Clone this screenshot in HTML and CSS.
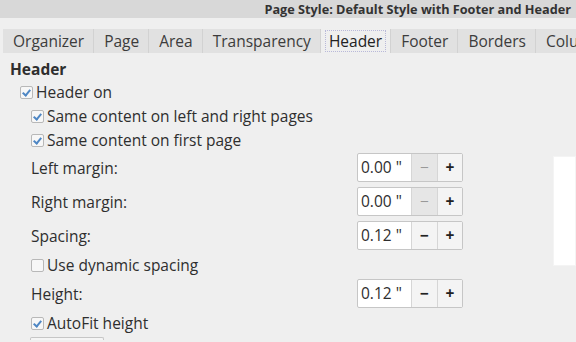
FILE: index.html
```html
<!DOCTYPE html>
<html lang="en">
<head>
    <meta charset="UTF-8">
    <title>Page Style</title>
    <link rel="stylesheet" href="styles.css">
</head>
<body>
    <div class="titlebar">Page Style: Default Style with Footer and Header</div>

    <div class="tabs">
        <div class="tab">Organizer</div>
        <div class="tab">Page</div>
        <div class="tab">Area</div>
        <div class="tab">Transparency</div>
        <div class="tab active"><span class="focus">Header</span></div>
        <div class="tab">Footer</div>
        <div class="tab">Borders</div>
        <div class="tab">Columns</div>
    </div>

    <div class="page">
        <div class="form">
            <div class="heading">Header</div>
            <label class="check lvl1"><span class="box on"></span>Header on</label>
            <label class="check lvl2"><span class="box on"></span>Same content on left and right pages</label>
            <label class="check lvl2"><span class="box on"></span>Same content on first page</label>

            <div class="field">
                <span class="label">Left margin:</span>
                <div class="spin">
                    <span class="value">0.00 "</span>
                    <span class="btn off">&minus;</span>
                    <span class="btn">+</span>
                </div>
            </div>
            <div class="field">
                <span class="label">Right margin:</span>
                <div class="spin">
                    <span class="value">0.00 "</span>
                    <span class="btn off">&minus;</span>
                    <span class="btn">+</span>
                </div>
            </div>
            <div class="field">
                <span class="label">Spacing:</span>
                <div class="spin">
                    <span class="value">0.12 "</span>
                    <span class="btn">&minus;</span>
                    <span class="btn">+</span>
                </div>
            </div>
            <label class="check lvl2 short"><span class="box"></span>Use dynamic spacing</label>
            <div class="field">
                <span class="label">Height:</span>
                <div class="spin">
                    <span class="value">0.12 "</span>
                    <span class="btn">&minus;</span>
                    <span class="btn">+</span>
                </div>
            </div>
            <label class="check lvl2 short"><span class="box on"></span>AutoFit height</label>
            <div class="more"></div>
        </div>

        <div class="preview"></div>
    </div>
</body>
</html>
```

FILE: styles.css
```css
html, body {
    height: 342px;
}
body {
    margin: 0;
    font-family: "Open Sans", sans-serif;
    font-size: 15.5px;
    color: #2e2e2e;
    background-color: #efefef;
    overflow: hidden;
}
.titlebar {
    height: 18px;
    line-height: 18px;
    background-color: #d8d8d8;
    text-align: right;
    padding-right: 5px;
    font-weight: bold;
    font-size: 12.7px;
    color: #333;
}
.tabs {
    display: flex;
    margin-top: 11px;
    padding-left: 3px;
    height: 24px;
    white-space: nowrap;
    overflow: hidden;
}
.tab {
    padding: 0 9px 0 10px;
    line-height: 24px;
    background-color: #e1e1e1;
    border-right: 1px solid #d2d2d2;
    color: #3c3c3c;
}
.tab.active {
    background-color: #efefef;
    border-top: 2px solid #a9a1e6;
    margin-top: -2px;
    line-height: 24px;
    padding: 0 4px;
}
.focus {
    display: inline-block;
    padding: 0 3px;
    line-height: 20px;
    border: 1px dotted #b9b9d9;
    color: #222;
}
.page {
    display: flex;
    justify-content: space-between;
}
.form {
    padding: 7px 0 0 10px;
    display: flex;
    flex-direction: column;
}
.heading {
    font-weight: bold;
    height: 18px;
    line-height: 18px;
    margin-bottom: 2px;
}
.check {
    display: flex;
    align-items: center;
    height: 24px;
}
.lvl1 {
    padding-left: 10px;
}
.lvl2 {
    padding-left: 21px;
}
.box {
    width: 11px;
    height: 11px;
    border: 1px solid #b8b8b8;
    border-radius: 2px;
    background-color: #f7f7f7;
    margin-right: 3px;
    position: relative;
}
.box.on::after {
    content: "";
    position: absolute;
    left: 3px;
    top: 1px;
    width: 3px;
    height: 6px;
    border: solid #4f87c4;
    border-width: 0 2px 2px 0;
    transform: rotate(40deg);
}
.field {
    display: flex;
    align-items: center;
    justify-content: space-between;
    box-sizing: border-box;
    width: 453px;
    padding-left: 21px;
    height: 29px;
    margin-top: 5px;
}
.check + .field {
    margin-top: 1px;
}
.short + .field {
    margin-top: 2px;
}
.spin {
    display: flex;
    height: 27px;
    border: 1px solid #c6c6c6;
    border-radius: 2px;
    background-color: #fff;
}
.value {
    width: 53px;
    padding-left: 3px;
    line-height: 27px;
    box-sizing: border-box;
}
.btn {
    width: 25px;
    text-align: center;
    line-height: 27px;
    background-color: #f4f4f4;
    border-left: 1px solid #d6d6d6;
    color: #222;
    font-weight: bold;
}
.btn:last-child {
    width: 24px;
}
.btn.off {
    background-color: #e6e6e6;
    color: #999;
    font-weight: normal;
}
.short {
    margin-top: 3px;
}
.more {
    width: 72px;
    height: 2px;
    margin: 2px 0 0 20px;
    border: 1px solid #c6c6c6;
    border-bottom: none;
    border-radius: 2px 2px 0 0;
    background-color: #f5f5f5;
}
.preview {
    width: 21px;
    height: 108px;
    margin-top: 103px;
    background-color: #fff;
    border: 1px solid #f4f4f4;
}
```
